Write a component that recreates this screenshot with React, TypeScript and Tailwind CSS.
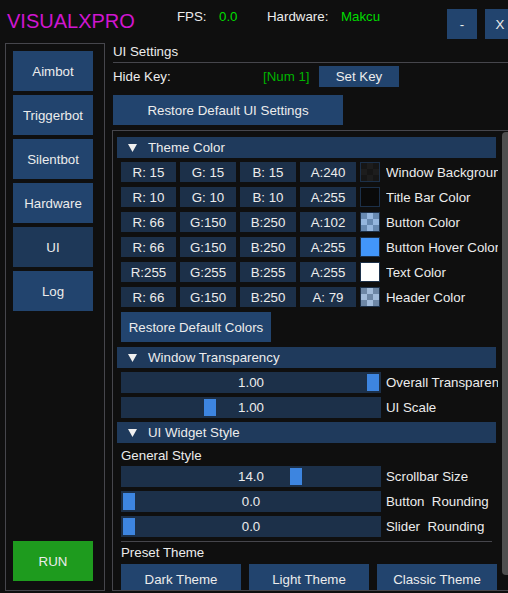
import React from 'react';

const BTN = 'bg-[#22446e]';
const FRAME = 'bg-[#1c3049]';
const HEAD = 'bg-[#1f3a5c]';

type Sw =
  | { kind: 'solid'; color: string }
  | { kind: 'checker'; dark: string; light: string };

function Swatch({ sw }: { sw: Sw }) {
  if (sw.kind === 'solid') {
    return <div className="w-[20px] h-[20px] shrink-0 border border-[#1c3049]" style={{ background: sw.color }} />;
  }
  const cells = [0, 1, 2, 3, 4, 5, 6, 7, 8];
  return (
    <div className="w-[20px] h-[20px] shrink-0 border border-[#1c3049] grid grid-cols-3 grid-rows-3">
      {cells.map((i) => (
        <div key={i} style={{ background: i % 2 === 0 ? sw.dark : sw.light }} />
      ))}
    </div>
  );
}

function Header({ title }: { title: string }) {
  return (
    <div className={`flex items-center shrink-0 h-[21px] w-[379px] ${HEAD}`}>
      <svg width="9" height="8" viewBox="0 0 9 8" className="ml-[11px] shrink-0">
        <polygon points="0,0 9,0 4.5,8" fill="#f0f0f0" />
      </svg>
      <span className="ml-[11px]">{title}</span>
    </div>
  );
}

function Slider({ value, grab, label }: { value: string; grab: number; label: string }) {
  return (
    <div className="flex items-center h-[21px] ml-[4px] shrink-0">
      <div className={`relative w-[260px] h-[21px] ${FRAME} flex items-center justify-center`}>
        <div className="absolute top-[2px] w-[12px] h-[17px] bg-[#3d85e0]" style={{ left: grab }} />
        <span className="relative">{value}</span>
      </div>
      <span className="ml-[5px] w-[112px] overflow-hidden whitespace-pre">{label}</span>
    </div>
  );
}

const rows: { v: string[]; sw: Sw; label: string }[] = [
  { v: ['R: 15', 'G: 15', 'B: 15', 'A:240'], sw: { kind: 'checker', dark: '#161616', light: '#1d1d1d' }, label: 'Window Background' },
  { v: ['R: 10', 'G: 10', 'B: 10', 'A:255'], sw: { kind: 'solid', color: '#0a0a0a' }, label: 'Title Bar Color' },
  { v: ['R: 66', 'G:150', 'B:250', 'A:102'], sw: { kind: 'checker', dark: '#6789b1', light: '#95b6de' }, label: 'Button Color' },
  { v: ['R: 66', 'G:150', 'B:250', 'A:255'], sw: { kind: 'solid', color: '#4296fa' }, label: 'Button Hover Color' },
  { v: ['R:255', 'G:255', 'B:255', 'A:255'], sw: { kind: 'solid', color: '#ffffff' }, label: 'Text Color' },
  { v: ['R: 66', 'G:150', 'B:250', 'A: 79'], sw: { kind: 'checker', dark: '#6d87a6', light: '#a1bbda' }, label: 'Header Color' },
];

const cellW = ['w-[55px]', 'w-[56px]', 'w-[56px]', 'w-[56px]'];

export default function App() {
  const side = ['Aimbot', 'Triggerbot', 'Silentbot', 'Hardware', 'UI', 'Log'];
  return (
    <div className="w-[508px] h-[593px] overflow-hidden bg-[#0f0f0f] text-[#ececec] text-[13.3px] leading-[15px] font-['Liberation_Sans',Arial,sans-serif]">
      {/* top bar */}
      <div className="flex items-start h-[43px]">
        <div className="w-[177px] shrink-0 pl-[7px] pt-[11px] text-[20px] leading-[20px] text-[#d016d0]">VISUALXPRO</div>
        <div className="w-[42px] shrink-0 pt-[9px]">FPS:</div>
        <div className="w-[48px] shrink-0 pt-[9px] text-[#00dc00]">0.0</div>
        <div className="w-[74px] shrink-0 pt-[9px]">Hardware:</div>
        <div className="w-[106px] shrink-0 pt-[9px] text-[#00dc00]">Makcu</div>
        <div className={`mt-[9px] w-[30px] h-[30px] shrink-0 ${BTN} flex items-center justify-center`}>-</div>
        <div className={`mt-[9px] ml-[8px] w-[30px] h-[30px] shrink-0 ${BTN} flex items-center justify-center`}>X</div>
      </div>

      <div className="flex">
        {/* sidebar */}
        <div className="ml-[5px] w-[100px] h-[548px] shrink-0 border border-[#46464c] flex flex-col items-start gap-[4px] pl-[7px] pt-[7px] pb-[9px]">
          {side.map((s) => (
            <div
              key={s}
              className={`w-[80px] h-[40px] shrink-0 flex items-center justify-center ${s === 'UI' ? 'bg-[#1e3858]' : BTN}`}
            >
              {s}
            </div>
          ))}
          <div className="mt-auto w-[80px] h-[40px] shrink-0 flex items-center justify-center bg-[#1e9b1e]">RUN</div>
        </div>

        {/* content */}
        <div className="ml-[8px] w-[395px] shrink-0 flex flex-col">
          <div className="mt-[1px]">UI Settings</div>
          <div className="mt-[3px] h-px w-full bg-[#46464c]" />
          <div className="mt-[3px] h-[21px] flex items-center">
            <span className="w-[150px] shrink-0">Hide Key:</span>
            <span className="w-[56px] shrink-0 text-[#00b400]">[Num 1]</span>
            <div className={`w-[80px] h-[21px] ${BTN} flex items-center justify-center`}>Set Key</div>
          </div>
          <div className={`mt-[8px] w-[230px] h-[30px] ${BTN} flex items-center justify-center`}>
            Restore Default UI Settings
          </div>

          {/* child scroll area */}
          <div className="mt-[5px] -ml-[1px] w-[410px] h-[461px] shrink-0 border border-[#46464c] flex overflow-hidden">
            <div className="w-[389px] shrink-0 pl-[4px] pt-[6px] flex flex-col">
              <Header title="Theme Color" />
              <div className="mt-[4px] flex flex-col gap-[5px] ml-[4px]">
                {rows.map((r) => (
                  <div key={r.label} className="flex items-center h-[20px] gap-[4px]">
                    {r.v.map((t, i) => (
                      <div key={i} className={`${cellW[i]} h-[20px] shrink-0 ${FRAME} flex items-center justify-center whitespace-pre`}>
                        {t}
                      </div>
                    ))}
                    <Swatch sw={r.sw} />
                    <span className="ml-[2px] w-[112px] overflow-hidden whitespace-nowrap">{r.label}</span>
                  </div>
                ))}
              </div>
              <div className={`mt-[5px] ml-[4px] w-[150px] h-[30px] shrink-0 ${BTN} flex items-center justify-center`}>
                Restore Default Colors
              </div>

              <div className="mt-[5px]">
                <Header title="Window Transparency" />
              </div>
              <div className="mt-[4px]">
                <Slider value="1.00" grab={246} label="Overall Transparency" />
              </div>
              <div className="mt-[4px]">
                <Slider value="1.00" grab={83} label="UI Scale" />
              </div>

              <div className="mt-[4px]">
                <Header title="UI Widget Style" />
              </div>
              <div className="mt-[5px] ml-[4px]">General Style</div>
              <div className="mt-[3px]">
                <Slider value="14.0" grab={169} label="Scrollbar Size" />
              </div>
              <div className="mt-[4px]">
                <Slider value="0.0" grab={2} label="Button  Rounding" />
              </div>
              <div className="mt-[4px]">
                <Slider value="0.0" grab={2} label="Slider  Rounding" />
              </div>
              <div className="mt-[4px] ml-[4px] h-px w-[371px] shrink-0 bg-[#46464c]" />
              <div className="mt-[3px] ml-[4px]">Preset Theme</div>
              <div className="mt-[4px] ml-[4px] flex gap-[8px]">
                {['Dark Theme', 'Light Theme', 'Classic Theme'].map((t) => (
                  <div key={t} className={`w-[120px] h-[30px] shrink-0 ${BTN} flex items-center justify-center`}>
                    {t}
                  </div>
                ))}
              </div>
            </div>
            <div className="w-[14px] shrink-0">
              <div className="mt-[1px] h-[443px] rounded-[4px] bg-[#4f4f4f]" />
            </div>
          </div>
        </div>
      </div>
    </div>
  );
}
